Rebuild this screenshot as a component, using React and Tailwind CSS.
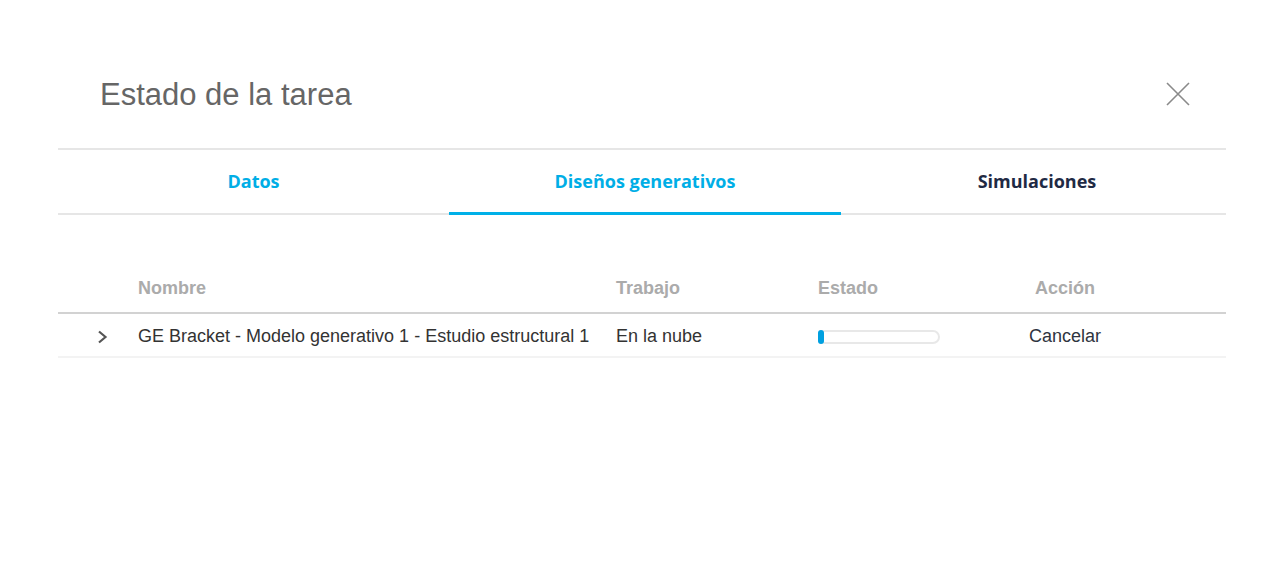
import React, { useState } from 'react';

const tabs = [
  { label: 'Datos', cls: 'w-[391px] text-[#00aee6]' },
  { label: 'Diseños generativos', cls: 'w-[392px] text-[#00aee6]' },
  { label: 'Simulaciones', cls: 'flex-1 pl-[7px] text-[#1f2a44]' },
];

const jobs = [
  { id: 1, name: 'GE Bracket - Modelo generativo 1 - Estudio estructural 1', work: 'En la nube', progress: 3 },
];

function CloseIcon() {
  return (
    <svg width="24" height="24" viewBox="0 0 24 24" fill="none" stroke="#8a8a8a" strokeWidth="1.6">
      <path d="M1 1 L23 23 M23 1 L1 23" />
    </svg>
  );
}

function Chevron() {
  return (
    <svg width="12" height="14" viewBox="0 0 12 14" fill="none" stroke="#555" strokeWidth="2.2">
      <path d="M2 1.5 L8.5 7 L2 12.5" />
    </svg>
  );
}

export default function App() {
  const [active, setActive] = useState(1);

  return (
    <div className="w-[1284px] h-[566px] bg-white pt-[60px] px-[58px]" style={{ fontFamily: '"Liberation Sans", Arial, sans-serif' }}>
      {/* header */}
      <div className="flex items-center justify-between h-[68px] pl-[42px] pr-[36px]">
        <h1 className="text-[31px] text-[#666] leading-none">Estado de la tarea</h1>
        <button className="w-[24px] h-[24px] flex items-center justify-center"><CloseIcon /></button>
      </div>

      {/* tabs */}
      <div className="mt-[20px] border-t-2 border-b-2 border-[#e6e6e6] flex h-[67px]" style={{ fontFamily: '"Open Sans", sans-serif' }}>
        {tabs.map((t, i) => (
          <button
            key={t.label}
            onClick={() => setActive(i)}
            className={`relative flex items-center justify-center text-[18px] font-bold ${t.cls}`}
          >
            {t.label}
            {active === i && <span className="absolute left-0 right-0 -bottom-[2px] h-[3px] bg-[#00b0e8]" />}
          </button>
        ))}
      </div>

      {/* table */}
      <div className="mt-[50px]">
        <div className="flex items-center h-[49px] border-b-2 border-[#d2d2d2] text-[18px] font-bold text-[#ababab]">
          <div className="w-[80px]" />
          <div className="w-[478px]">Nombre</div>
          <div className="w-[202px]">Trabajo</div>
          <div className="w-[172px]">Estado</div>
          <div className="w-[150px] text-center">Acción</div>
        </div>
        <div>
          {jobs.map(j => (
            <div key={j.id} className="flex items-center h-[44px] pt-[3px] border-b-2 border-[#f3f3f3] text-[18px] text-[#333]">
              <div className="w-[80px] flex justify-center pl-[10px]"><Chevron /></div>
              <div className="w-[478px] whitespace-nowrap">{j.name}</div>
              <div className="w-[202px]">{j.work}</div>
              <div className="w-[172px]">
                <div className="relative w-[122px] h-[14px] rounded-full border-2 border-[#e8e8e8]">
                  <div className="absolute left-[-2px] top-[-2px] bottom-[-2px] w-[6px] bg-[#00a0e0] rounded-full" />
                </div>
              </div>
              <div className="w-[150px] text-center text-[#2e3440]">Cancelar</div>
            </div>
          ))}
        </div>
      </div>
    </div>
  );
}
